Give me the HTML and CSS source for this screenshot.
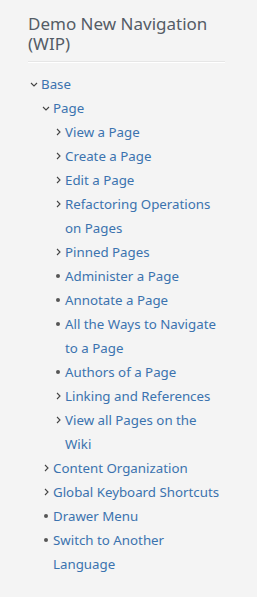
FILE: index.html
```html
<!DOCTYPE html>
<html lang="en">
<head>
    <meta charset="UTF-8">
    <meta name="viewport" content="width=device-width, initial-scale=1.0">
    <title>Demo New Navigation (WIP)</title>
    <link rel="stylesheet" href="styles.css">
</head>
<body>
    <div class="sidebar">
        <h2 class="title">Demo New Navigation (WIP)</h2>
        <div class="divider"></div>
        <ul class="tree">
            <li>
                <div class="row"><span class="toggle"><svg width="8" height="5" viewBox="0 0 8 5"><polyline points="1,1 4,4 7,1" /></svg></span><a href="#">Base</a></div>
                <ul class="tree">
                    <li>
                        <div class="row"><span class="toggle"><svg width="8" height="5" viewBox="0 0 8 5"><polyline points="1,1 4,4 7,1" /></svg></span><a href="#">Page</a></div>
                        <ul class="tree">
                            <li><div class="row"><span class="toggle"><svg width="5" height="8" viewBox="0 0 5 8"><polyline points="1,1 4,4 1,7" /></svg></span><a href="#">View a Page</a></div></li>
                            <li><div class="row"><span class="toggle"><svg width="5" height="8" viewBox="0 0 5 8"><polyline points="1,1 4,4 1,7" /></svg></span><a href="#">Create a Page</a></div></li>
                            <li><div class="row"><span class="toggle"><svg width="5" height="8" viewBox="0 0 5 8"><polyline points="1,1 4,4 1,7" /></svg></span><a href="#">Edit a Page</a></div></li>
                            <li><div class="row"><span class="toggle"><svg width="5" height="8" viewBox="0 0 5 8"><polyline points="1,1 4,4 1,7" /></svg></span><a href="#">Refactoring Operations on Pages</a></div></li>
                            <li><div class="row"><span class="toggle"><svg width="5" height="8" viewBox="0 0 5 8"><polyline points="1,1 4,4 1,7" /></svg></span><a href="#">Pinned Pages</a></div></li>
                            <li><div class="row"><span class="toggle"><i class="dot"></i></span><a href="#">Administer a Page</a></div></li>
                            <li><div class="row"><span class="toggle"><i class="dot"></i></span><a href="#">Annotate a Page</a></div></li>
                            <li><div class="row"><span class="toggle"><i class="dot"></i></span><a href="#">All the Ways to Navigate to a Page</a></div></li>
                            <li><div class="row"><span class="toggle"><i class="dot"></i></span><a href="#">Authors of a Page</a></div></li>
                            <li><div class="row"><span class="toggle"><svg width="5" height="8" viewBox="0 0 5 8"><polyline points="1,1 4,4 1,7" /></svg></span><a href="#">Linking and References</a></div></li>
                            <li><div class="row"><span class="toggle"><svg width="5" height="8" viewBox="0 0 5 8"><polyline points="1,1 4,4 1,7" /></svg></span><a href="#">View all Pages on the Wiki</a></div></li>
                        </ul>
                    </li>
                    <li><div class="row"><span class="toggle"><svg width="5" height="8" viewBox="0 0 5 8"><polyline points="1,1 4,4 1,7" /></svg></span><a href="#">Content Organization</a></div></li>
                    <li><div class="row"><span class="toggle"><svg width="5" height="8" viewBox="0 0 5 8"><polyline points="1,1 4,4 1,7" /></svg></span><a href="#">Global Keyboard Shortcuts</a></div></li>
                    <li><div class="row"><span class="toggle"><i class="dot"></i></span><a href="#">Drawer Menu</a></div></li>
                    <li><div class="row"><span class="toggle"><i class="dot"></i></span><a href="#">Switch to Another Language</a></div></li>
                </ul>
            </li>
        </ul>
    </div>
</body>
</html>
```

FILE: styles.css
```css
body {
    margin: 0;
    background-color: #fff;
    font-family: "Noto Sans", "Open Sans", sans-serif;
}
.sidebar {
    width: 257px;
    min-height: 597px;
    box-sizing: border-box;
    padding: 14px 32px 0 28px;
    background-color: #f4f4f4;
}
.title {
    margin: 0;
    font-size: 17px;
    line-height: 20px;
    font-weight: normal;
    color: #545c66;
}
.divider {
    margin: 7px 0 9px;
    height: 1px;
    border-top: 1px solid #e6e6e6;
    background-color: #fff;
}
.tree {
    list-style: none;
    margin: 0;
    padding: 0;
}
.tree .tree {
    padding-left: 12px;
}
.row {
    display: flex;
    align-items: flex-start;
    font-size: 13.3px;
    line-height: 24px;
}
.toggle {
    flex: none;
    width: 12px;
    height: 24px;
    display: flex;
    align-items: center;
    justify-content: center;
    margin-right: 1px;
}
.toggle svg {
    fill: none;
    stroke: #444;
    stroke-width: 1.1;
}
.dot {
    width: 4.5px;
    height: 4.5px;
    border-radius: 50%;
    background-color: #555;
}
.row a {
    color: #3b73af;
    text-decoration: none;
}
```
